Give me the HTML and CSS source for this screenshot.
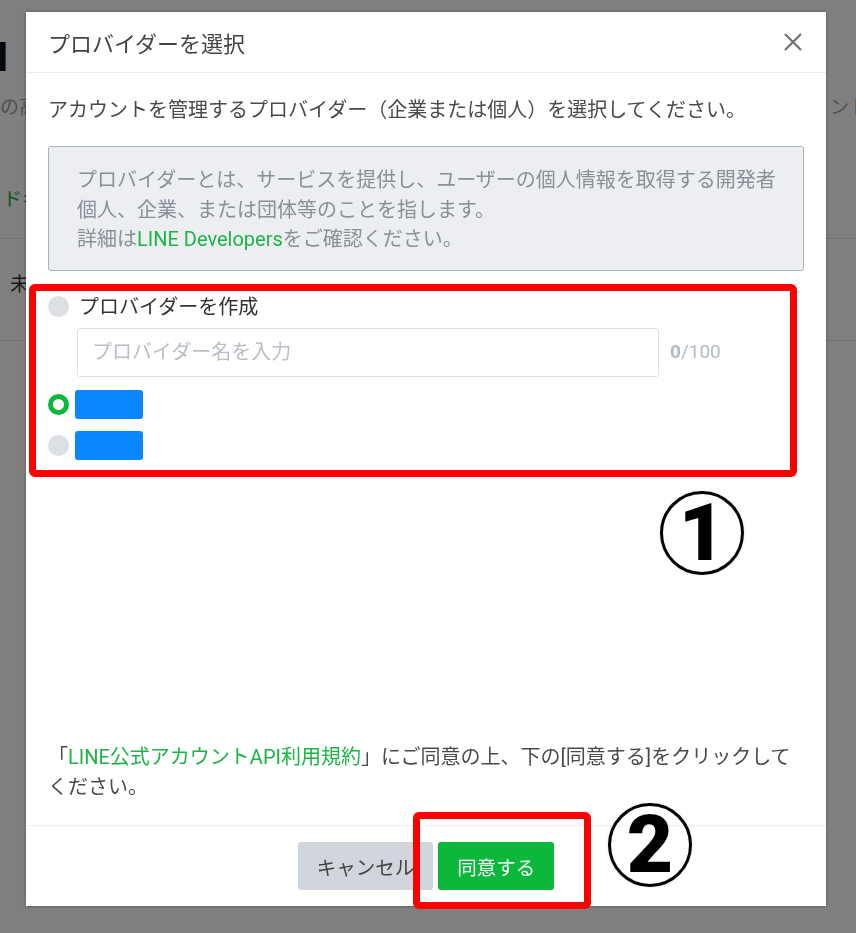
FILE: index.html
```html
<!DOCTYPE html>
<html lang="ja">

<head>
    <meta charset="UTF-8">
    <meta name="viewport" content="width=device-width, initial-scale=1.0">
    <title>プロバイダーを選択</title>
    <link rel="stylesheet" href="styles.css">
</head>

<body>
    <!-- page behind the dialog -->
    <div class="page">
        <h1 class="page-title">API</h1>
        <div class="page-lead">
            <span>の高い安全性とメッセージ配信</span>
            <span>ントの設定</span>
        </div>
        <div class="page-section">
            <div class="page-link">ドキュメント</div>
        </div>
        <div class="page-section page-item">
            <div>未設定</div>
        </div>
    </div>

    <div class="overlay">
        <div class="modal">
            <div class="modal-header">
                <h2 class="modal-title">プロバイダーを選択</h2>
                <button class="close-btn" aria-label="閉じる">
                    <svg width="18" height="18" viewBox="0 0 18 18">
                        <path d="M1 1L17 17M17 1L1 17" stroke="#6b6b6b" stroke-width="2" fill="none"/>
                    </svg>
                </button>
            </div>

            <div class="modal-body">
                <p class="intro">アカウントを管理するプロバイダー（企業または個人）を選択してください。</p>

                <div class="notice">
                    プロバイダーとは、サービスを提供し、ユーザーの個人情報を取得する開発者個人、企業、または団体等のことを指します。<br>
                    詳細は<a href="#">LINE Developers</a>をご確認ください。
                </div>

                <div class="providers">
                    <label class="radio-row">
                        <span class="radio"></span>
                        <span>プロバイダーを作成</span>
                    </label>
                    <div class="name-field">
                        <input class="name-input" type="text" placeholder="プロバイダー名を入力">
                        <span class="counter"><b>0</b>/100</span>
                    </div>
                    <label class="radio-row">
                        <span class="radio checked"></span>
                        <span class="redacted"></span>
                    </label>
                    <label class="radio-row">
                        <span class="radio"></span>
                        <span class="redacted"></span>
                    </label>
                </div>

                <p class="terms">「<a href="#">LINE公式アカウントAPI利用規約</a>」にご同意の上、下の[同意する]をクリックしてください。</p>
            </div>

            <div class="modal-footer">
                <button class="btn btn-cancel">キャンセル</button>
                <button class="btn btn-agree">同意する</button>
            </div>
        </div>

        <!-- annotations -->
        <div class="mark-box mark-box-1"></div>
        <div class="mark-box mark-box-2"></div>
        <div class="mark-num mark-num-1">1</div>
        <div class="mark-num mark-num-2">2</div>
    </div>
</body>

</html>
```

FILE: styles.css
```css
body {
    margin: 0;
    height: 933px;
    overflow: hidden;
    font-family: Roboto, "Noto Sans CJK JP", sans-serif;
    color: #333;
    background: #fff;
}

/* page behind */
.page {
    padding-top: 36px;
    white-space: nowrap;
    overflow: hidden;
}

.page-title {
    margin: 0;
    font-size: 40px;
    line-height: 44px;
    font-weight: 700;
    color: #111;
    text-indent: -56px;
}

.page-lead {
    display: grid;
    grid-template-columns: 830px 1fr;
    margin-top: 13px;
    font-size: 19px;
    line-height: 30px;
    color: #a0a0a0;
    overflow: hidden;
}

.page-section {
    border-bottom: 1px solid #e4e4e4;
    font-size: 19px;
    line-height: 30px;
}

.page-link {
    margin-top: 62px;
    padding: 0 0 23px 3px;
    color: #1aab3a;
}

.page-item {
    padding: 31px 0 40px 10px;
    color: #333;
}

/* dialog */
.overlay {
    position: fixed;
    inset: 0;
    background: rgba(0, 0, 0, 0.5);
    padding: 12px 0 0 26px;
}

.modal {
    width: 800px;
    height: 894px;
    background: #fff;
    display: flex;
    flex-direction: column;
    box-shadow: 0 0 3px rgba(0, 0, 0, 0.35);
}

.modal-header {
    height: 60px;
    flex: none;
    border-bottom: 1px solid #ececec;
    display: flex;
    align-items: center;
    justify-content: space-between;
    padding: 0 24px 0 22px;
}

.modal-title {
    margin: 0;
    font-size: 22px;
    font-weight: 400;
    color: #444;
}

.close-btn {
    border: none;
    background: none;
    padding: 0;
    width: 18px;
    height: 18px;
    display: flex;
}

.modal-body {
    flex: 1;
    display: flex;
    flex-direction: column;
    padding: 22px 22px 23px;
    font-size: 20px;
    line-height: 30px;
    color: #4a4a4a;
}

.intro {
    margin: 0;
}

.notice {
    margin-top: 21px;
    background: #eceef1;
    border: 1.5px solid #aab1ba;
    border-radius: 3px;
    padding: 19px 22px 15px 28px;
    line-height: 29.5px;
    color: #8a9098;
}

.notice a,
.terms a {
    color: #1db446;
    text-decoration: none;
}

.providers {
    margin-top: 21px;
}

.radio-row {
    display: flex;
    align-items: center;
    gap: 10px;
    height: 30px;
    color: #333;
}

.radio-row + .radio-row {
    margin-top: 11px;
}

.radio {
    flex: none;
    width: 21px;
    height: 21px;
    box-sizing: border-box;
    border-radius: 50%;
    background: #dcdfe3;
}

.radio.checked {
    background: #fff;
    border: 5.5px solid #0bb83b;
}

.redacted {
    width: 68px;
    height: 29px;
    margin-left: -4px;
    border-radius: 3px;
    background: #0a86ff;
}

.name-field {
    display: flex;
    align-items: center;
    gap: 11px;
    margin: 6px 0 13px 29px;
}

.name-input {
    width: 582px;
    height: 49px;
    box-sizing: border-box;
    border: 1.5px solid #dde1e6;
    border-radius: 3px;
    padding: 0 14px;
    font: inherit;
    color: #333;
    outline: none;
}

.name-input::placeholder {
    color: #b9bfc6;
}

.counter {
    font-size: 19px;
    color: #b3bbc3;
}

.terms {
    margin: auto 0 0;
}

.modal-footer {
    flex: none;
    border-top: 1px solid #efefef;
    padding: 16px;
    display: flex;
    justify-content: center;
    gap: 5px;
}

.btn {
    height: 48px;
    padding: 0 19px;
    border: none;
    border-radius: 3px;
    font-family: inherit;
    font-size: 19.5px;
    white-space: nowrap;
}

.btn-cancel {
    background: #d1d6dc;
    color: #444;
}

.btn-agree {
    background: #0bb83b;
    color: #fff;
}

/* annotations */
.mark-box {
    position: absolute;
    box-sizing: border-box;
    border: 7px solid #ff0000;
    border-radius: 6px;
}

.mark-box-1 {
    left: 29px;
    top: 284px;
    width: 768px;
    height: 193px;
}

.mark-box-2 {
    left: 413px;
    top: 812px;
    width: 178px;
    height: 97px;
}

.mark-num {
    position: absolute;
    width: 84px;
    height: 84px;
    box-sizing: border-box;
    border: 3px solid #000;
    border-radius: 50%;
    display: flex;
    align-items: center;
    justify-content: center;
    font-family: Roboto, sans-serif;
    font-size: 80px;
    font-weight: 900;
    line-height: 1;
    color: #000;
    box-shadow: 0 0 3px rgba(0, 0, 0, 0.15);
}

.mark-num-1 {
    left: 660px;
    top: 491px;
}

.mark-num-2 {
    left: 608px;
    top: 803px;
}
```
